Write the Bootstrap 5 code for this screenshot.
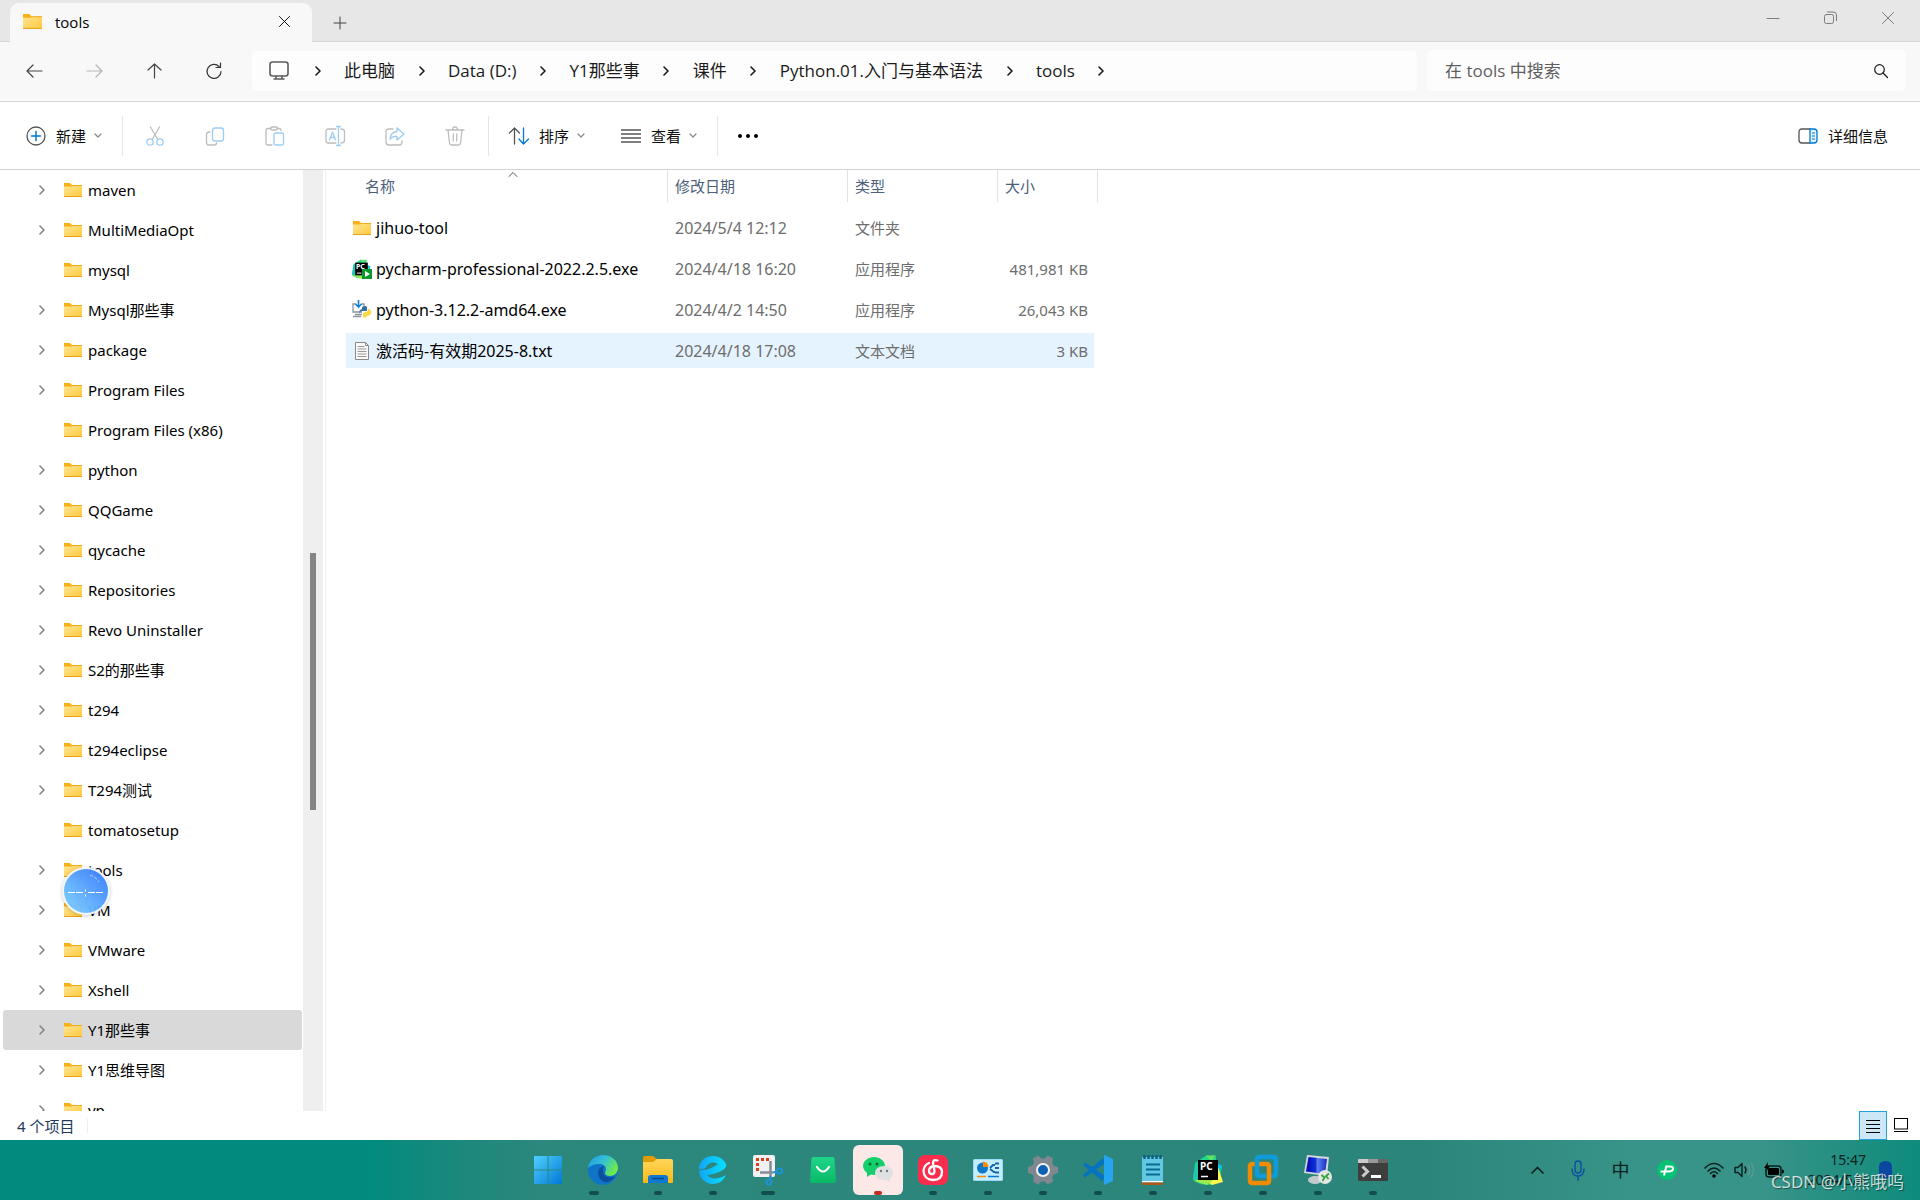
<!DOCTYPE html>
<html lang="zh-CN">
<head>
<meta charset="utf-8">
<meta name="viewport" content="width=device-width, initial-scale=1">
<title>tools</title>
<link href="https://cdn.jsdelivr.net/npm/bootstrap@5.3.0/dist/css/bootstrap.min.css" rel="stylesheet">
<style>
body{font-family:"Noto Sans","Noto Sans CJK SC",sans-serif;font-size:15px;line-height:20px;color:#000;background:#fff;overflow:hidden}
button{font:inherit;color:inherit;background:none;border:0;padding:0}
svg{display:block;flex:none;overflow:visible}
.ln{fill:none;stroke-linecap:round;stroke-linejoin:round}
.ln:not([stroke]){stroke:currentColor}
.cond{font-family:"Open Sans","Noto Sans CJK SC",sans-serif}
.tabstrip{height:42px;background:#e7e7e7;border-bottom:1px solid #d6d6d6;padding-left:10px}
.wintab{width:302px;height:39px;background:#f8f8f8;border-radius:9px 9px 0 0;margin-bottom:-1px;padding:0 22px 2px 13px;gap:13px}
.newtab{margin-left:22px}
.caption-btns{gap:45px;padding:11px 26px 0 0;color:#7b7b7b}
.navband{height:60px;background:#f8f8f8;border-bottom:1px solid #d6d6d6;padding:8px 14px 10px 26px;color:#1a1a1a;font-size:17px;line-height:24px}
.navkeys{gap:43px;width:226px}
.addressbar{height:40px;background:#fdfdfd;border-radius:5px;padding:0 16px 0 17px;margin-right:10px}
.addressbar ol{list-style:none;margin:0;padding:0 0 0 2px}
.addressbar a{color:#1a1a1a;text-decoration:none;white-space:nowrap}
.crumb-sep{width:53px;display:flex;justify-content:center}
.searchbox{width:479px;height:41px;background:#fdfdfd;border-radius:5px;padding:0 18px}
.searchbox input{border:0;background:none;outline:0;color:#5f5f5f;font:inherit;padding:0}
.searchbox input::placeholder{color:#5f5f5f;opacity:1}
.cmdbar{height:68px;border-bottom:1px solid #d2d2d2;padding:0 32px 0 26px;color:#111}
.cmd{display:flex;align-items:center;gap:10px}
.cmd svg:last-child:not(:first-child){color:#888;margin-left:-2px}
.vline{width:1px;height:40px;background:#e6e6e6}
.cmdgroup{gap:20px}
.sortview{gap:36px}
.icongroup{gap:40px;padding:0 23px 0 22px}
.main-area{flex:1 1 0;min-height:0}
.tree{width:303px;overflow:hidden;margin:0;padding:0;list-style:none}
.tree a{display:flex;align-items:center;height:40px;margin:0 1px 0 3px;padding-left:34px;color:#000;text-decoration:none;border-radius:3px;white-space:nowrap}
.tree a.active{background:#d9d9d9}
.tree .twist{width:27px;color:#858585}
.tree .nm{margin-left:6px}
.scrollrail{width:20px;background:#efefef;padding:383px 0 0 7px}
.scrollthumb{width:6px;height:257px;background:#858585}
.content-pane{border-left:1px solid #f0f0f0;margin-left:2px;padding-left:20px}
.filetable{width:752px;table-layout:fixed;border-collapse:separate;border-spacing:0}
.filetable th{font-weight:400;color:#4c607a;height:32px;padding:0 0 0 7px;border-right:1px solid #e2e2e2}
.filetable th:first-child{padding-left:19px}
.filetable td{height:41px;padding:3px 0 3px 7px;color:#6d6d6d;white-space:nowrap}
.filetable td:nth-child(-n+2){font-size:16px}
.filetable td:first-child{padding-left:6px;color:#000}
.filetable td:last-child{padding:3px 10px 3px 0;text-align:right}
.filetable .spacer td{height:5px;padding:0}
.cellfill{height:35px;display:flex;align-items:center}
.filetable tr.picked td{background:linear-gradient(#e5f3ff,#e5f3ff) 0 3px/100% 35px no-repeat}
.filetable tr.picked td:last-child{background-size:calc(100% - 4px) 35px}
.statusbar{height:29px;color:#1e3a5c;padding:0 5px 0 17px}
.statusbar .vline{height:14px;margin-left:13px;background:#eee}
.viewbtn{width:28px;height:29px;border:1px solid transparent;display:flex;align-items:center;justify-content:center}
.viewbtn.on{background:#cce8f6;border-color:#26a0da}
.taskbar{height:60px;background:linear-gradient(90deg,#008b7e 0,#008b7e 19%,#1c887c 24%,#2c877d 28%,#2c857b 74%,#389388 85%,#389388 92%,#0e8b7c 100%)}
.apps{gap:5px;padding-left:523px}
.app{width:50px;height:50px;border-radius:6px;position:relative;display:flex;align-items:center;justify-content:center}
.app::after{content:"";position:absolute;bottom:0;left:21px;width:8px;height:4px;border-radius:2px;background:#124e49}
.app.idle::after{display:none}
.app.wide::after{left:18px;width:14px}
.app.multi::after{left:11px;width:10px}
.app.alert-on{background:#fde8e8}
.app.alert-on::after{background:#c42b1c}
.tray{color:#08201d;padding-right:28px;gap:27px}
.trayset{gap:10px}
.ime{font-size:18px}
.clockset{gap:13px;margin-left:-3px}
.clock{text-align:right;font-size:14px;line-height:20px;color:#08201d}
.watermark{position:absolute;right:16px;bottom:6px;font-size:17px;line-height:24px;color:rgba(255,255,255,.78);text-shadow:1px 1px 1px rgba(0,0,0,.45);white-space:nowrap}
.sortmark{position:absolute;left:182px;top:2px}
.floatball{position:absolute;left:62px;top:867px;width:48px;height:48px;opacity:.96;filter:drop-shadow(0 1px 2px rgba(0,0,0,.2))}
</style>
<script src="https://cdn.jsdelivr.net/npm/bootstrap@5.3.0/dist/js/bootstrap.bundle.min.js"></script>
</head>
<body>
<svg width="0" height="0" class="position-absolute" aria-hidden="true">
<defs>
<linearGradient id="fg" x1="0" y1="0" x2="1" y2="1"><stop offset="0" stop-color="#ffe596"/><stop offset="1" stop-color="#ffc93c"/></linearGradient>
<linearGradient id="wg" x1="0" y1="0" x2="1" y2="1"><stop offset="0" stop-color="#4fd0ff"/><stop offset="1" stop-color="#0078d4"/></linearGradient>
<linearGradient id="eg" x1="0" y1="0" x2="1" y2=".5"><stop offset="0" stop-color="#1b9de2"/><stop offset=".55" stop-color="#35c1d0"/><stop offset="1" stop-color="#6bea4a"/></linearGradient>
<linearGradient id="yg" x1="0" y1="0" x2="0" y2="1"><stop offset="0" stop-color="#ffd65c"/><stop offset="1" stop-color="#f9b914"/></linearGradient>
<linearGradient id="cg" x1="0" y1="0" x2="1" y2="0"><stop offset="0" stop-color="#12a5f4"/><stop offset="1" stop-color="#05e0ff"/></linearGradient>
<linearGradient id="gg" x1="0" y1="0" x2="0" y2="1"><stop offset="0" stop-color="#1ed58a"/><stop offset="1" stop-color="#09b964"/></linearGradient>
<linearGradient id="bg1" x1="0" y1="1" x2="1" y2="0"><stop offset="0" stop-color="#80d4ff"/><stop offset="1" stop-color="#3478fc"/></linearGradient>
<linearGradient id="mg" x1="0" y1="0" x2="1" y2="0"><stop offset="0" stop-color="#0008b0"/><stop offset=".45" stop-color="#1230d8"/><stop offset=".55" stop-color="#5b80f0"/><stop offset="1" stop-color="#1a2ac4"/></linearGradient>
<symbol id="folder" viewBox="0 0 18 14"><path d="M0 0h6l2 2v3H0z" fill="#f9b116"/><path d="M0 3.500h8l1.500-1.500H18v12H0z" fill="url(#fg)"/><path d="M8 2.500h10" stroke="#f0ac1b"/><path d="M0 13.500h18" stroke="#e8a11c"/></symbol>
<symbol id="chev" viewBox="0 0 6 10"><path d="M1 1l4 4-4 4" class="ln" stroke-width="1.6"/></symbol>
<symbol id="down" viewBox="0 0 8 5"><path d="M1 1l3 3 3-3" class="ln" stroke-width="1.200"/></symbol>
<symbol id="cross" viewBox="0 0 12 12"><path d="M.5.5l11 11M11.500.5l-11 11" class="ln"/></symbol>
<symbol id="pycharm" viewBox="0 0 30 30"><path d="M2 8l12-8 7 2 2-2v14l6-3-3 16-9 3-10-1-7-4z" fill="#21d789"/><path d="M0 22L4 6l6 24z" fill="#20c7b5"/><path d="M13 1l9-1-3 6z" fill="#6be05a"/><path d="M22 12l4-3 3 2-2 5z" fill="#07c3f2"/><path d="M12 25l13-13 5 15-11 3z" fill="#fcf84a"/><path d="M1 26l13 4 6-5H4z" fill="#9aec4a"/><path d="M5 5h20v20H5z"/><path d="M8 21.500h7" stroke="#fff" stroke-width="1.500"/></symbol>
</defs>
</svg>

<div class="d-flex flex-column vh-100 position-relative">
<header>
  <div class="tabstrip d-flex align-items-end">
    <div class="wintab d-flex align-items-center cond">
      <svg width="19" height="15"><use href="#folder"/></svg><span class="flex-grow-1">tools</span>
      <button aria-label="关闭标签页"><svg width="11" height="11"><use href="#cross"/></svg></button>
    </div>
    <button class="newtab align-self-center pt-1" aria-label="新建标签页"><svg width="12" height="12"><path d="M6 0v12M0 6h12" class="ln" stroke="#444"/></svg></button>
    <div class="caption-btns d-flex ms-auto align-self-start">
      <button aria-label="最小化"><svg width="12" height="12"><path d="M0 6.500h12" class="ln"/></svg></button>
      <button aria-label="还原"><svg width="13" height="13"><rect x=".5" y="3.500" width="9" height="9" rx="2" class="ln"/><path d="M3.500 1h5.500q3.500 0 3.500 3v5.500" class="ln"/></svg></button>
      <button aria-label="关闭"><svg width="12" height="12"><use href="#cross"/></svg></button>
    </div>
  </div>
  <nav class="navband d-flex align-items-center cond" aria-label="导航">
    <div class="navkeys d-flex align-items-center">
      <button aria-label="后退"><svg width="17" height="14"><path d="M16 7H1m6-6L1 7l6 6" class="ln" stroke="#444" stroke-width="1.200"/></svg></button>
      <button aria-label="前进" disabled><svg width="17" height="14"><path d="M1 7h15m-6-6l6 6-6 6" class="ln" stroke="#b5b5b5" stroke-width="1.200"/></svg></button>
      <button aria-label="向上"><svg width="17" height="15"><path d="M8.500 15V1M2 7l6.500-6L15 7" class="ln" stroke="#444" stroke-width="1.200"/></svg></button>
      <button aria-label="刷新"><svg width="16" height="16"><path d="M13 3.500A7 7 0 1 0 15 8.500M14.500 0v4.500H10" class="ln" stroke="#333" stroke-width="1.200"/></svg></button>
    </div>
    <div class="addressbar d-flex align-items-center flex-grow-1">
      <svg width="20" height="19"><rect x="1" y="1" width="18" height="14" rx="2.500" class="ln" stroke="#5c5c5c" stroke-width="1.600"/><path d="M7 15v3m6-3v3M5 18h10" class="ln" stroke="#5c5c5c" stroke-width="1.500"/></svg>
      <ol class="d-flex align-items-center">
        <li class="crumb-sep"><svg width="6" height="10"><use href="#chev"/></svg></li><li><a href="#">此电脑</a></li>
        <li class="crumb-sep"><svg width="6" height="10"><use href="#chev"/></svg></li><li><a href="#">Data (D:)</a></li>
        <li class="crumb-sep"><svg width="6" height="10"><use href="#chev"/></svg></li><li><a href="#">Y1那些事</a></li>
        <li class="crumb-sep"><svg width="6" height="10"><use href="#chev"/></svg></li><li><a href="#">课件</a></li>
        <li class="crumb-sep"><svg width="6" height="10"><use href="#chev"/></svg></li><li><a href="#">Python.01.入门与基本语法</a></li>
        <li class="crumb-sep"><svg width="6" height="10"><use href="#chev"/></svg></li><li><a href="#">tools</a></li>
        <li class="crumb-sep"><svg width="6" height="10"><use href="#chev"/></svg></li>
      </ol>
    </div>
    <div class="searchbox d-flex align-items-center">
      <input class="flex-grow-1" type="text" aria-label="搜索" placeholder="在 tools 中搜索">
      <svg width="14" height="14"><circle cx="5.500" cy="5.500" r="4.800" class="ln" stroke-width="1.200"/><path d="M9 9l4.500 4.500" class="ln" stroke-width="1.200"/></svg>
    </div>
  </nav>
  <div class="cmdbar d-flex align-items-center">
    <div class="cmdgroup d-flex align-items-center">
    <button class="cmd"><svg width="20" height="20"><circle cx="10" cy="10" r="9" class="ln" stroke="#555" stroke-width="1.300"/><path d="M10 5.500v9M5.500 10h9" class="ln" stroke="#0078d4" stroke-width="1.500"/></svg><span>新建</span><svg width="8" height="5"><use href="#down"/></svg></button>
    <div class="d-flex align-items-center">
    <div class="vline"></div>
    <div class="icongroup d-flex align-items-center">
      <button disabled aria-label="剪切"><svg width="20" height="20"><path d="M5.500 1l7 12M14.500 1l-7 12" class="ln" stroke="#bdbdbd" stroke-width="1.300"/><circle cx="5" cy="16" r="3.200" class="ln" stroke="#9ccdf0" stroke-width="1.300"/><circle cx="15" cy="16" r="3.200" class="ln" stroke="#9ccdf0" stroke-width="1.300"/></svg></button>
      <button disabled aria-label="复制"><svg width="20" height="20"><path d="M5 6H4q-2.500 0-2.500 2.500v8Q1.500 19 4 19h5q2.500 0 2.500-2" class="ln" stroke="#bdbdbd" stroke-width="1.300"/><rect x="7.500" y="2" width="11" height="13" rx="2.500" class="ln" stroke="#9ccdf0" stroke-width="1.300"/></svg></button>
      <button disabled aria-label="粘贴"><svg width="20" height="20"><path d="M6 2.500H3q-2 0-2 2V17q0 2 2 2h4M12 2.500h2q2 0 2 2" class="ln" stroke="#bdbdbd" stroke-width="1.300"/><rect x="5.500" y="1" width="7" height="3" rx="1.500" class="ln" stroke="#bdbdbd" stroke-width="1.300"/><rect x="9" y="7" width="9.500" height="12" rx="1.500" class="ln" stroke="#9ccdf0" stroke-width="1.300"/></svg></button>
      <button disabled aria-label="重命名"><svg width="20" height="20"><path d="M11 3H3.500Q1 3 1 5.500v9Q1 17 3.500 17H11M16 3q3.500 0 3.500 3v8q0 3-3.500 3" class="ln" stroke="#bdbdbd" stroke-width="1.300"/><path d="M4.500 14L7.500 6l3 8M5.500 11.500h4M11.500.5h4M11.500 19.500h4M13.500.5v19" class="ln" stroke="#9ccdf0" stroke-width="1.300"/></svg></button>
      <button disabled aria-label="共享"><svg width="20" height="20"><path d="M8 3H4Q1 3 1 6v10q0 3 3 3h10q3 0 3-3v-1" class="ln" stroke="#bdbdbd" stroke-width="1.300"/><path d="M12 2l7 6-7 6v-3.500q-5-.5-7 3Q5.500 6 12 5.500z" class="ln" stroke="#9ccdf0" stroke-width="1.300"/></svg></button>
      <button disabled aria-label="删除"><svg width="20" height="20"><path d="M1 4h18M3 4l1.500 13q.3 2 2 2h7q1.700 0 2-2L17 4M7.500 4q0-3 2.500-3t2.500 3M8.300 8v7M11.700 8v7" class="ln" stroke="#bdbdbd" stroke-width="1.300"/></svg></button>
    </div>
    <div class="vline"></div>
    </div>
    <div class="sortview d-flex align-items-center">
    <button class="cmd"><svg width="20" height="18"><path d="M5.500 17V1M.5 6l5-5 5 5" class="ln" stroke="#555" stroke-width="1.300"/><path d="M14.500 1v16M10 12l4.500 5 5-5" class="ln" stroke="#0078d4" stroke-width="1.300"/></svg><span>排序</span><svg width="8" height="5"><use href="#down"/></svg></button>
    <button class="cmd"><svg width="20" height="14"><path d="M0 1h20M0 5h20M0 9h20M0 13h20" stroke="#555" stroke-width="1.300"/></svg><span>查看</span><svg width="8" height="5"><use href="#down"/></svg></button>
    </div>
    <div class="vline"></div>
    <button aria-label="更多"><svg width="22" height="4"><circle cx="2" cy="2" r="2"/><circle cx="10" cy="2" r="2"/><circle cx="18" cy="2" r="2"/></svg></button>
    </div>
    <button class="cmd ms-auto"><svg width="20" height="16"><path d="M12 1H4Q1 1 1 4v8q0 3 3 3h8" class="ln" stroke="#555" stroke-width="1.300"/><path d="M12 1h4q3 0 3 3v8q0 3-3 3h-4z" fill="#e4f2fc" stroke="#0078d4" stroke-width="1.300"/><path d="M14 5h3M14 8h3M14 11h3" stroke="#0078d4" stroke-width="1.200"/></svg><span>详细信息</span></button>
  </div>
</header>

<div class="main-area d-flex">
  <ul class="tree" id="tree"></ul>
  <div class="scrollrail"><div class="scrollthumb"></div></div>
  <main class="content-pane flex-grow-1 position-relative">
    <svg class="sortmark" width="10" height="5"><path d="M1 4.500L5 .5l4 4" class="ln" stroke="#555"/></svg>
    <table class="filetable">
      <colgroup><col style="width:322px"><col style="width:180px"><col style="width:150px"><col style="width:100px"></colgroup>
      <thead><tr><th>名称</th><th>修改日期</th><th>类型</th><th>大小</th></tr></thead>
      <tbody>
        <tr class="spacer"><td></td></tr>
        <tr><td><div class="cellfill"><svg width="20" height="14"><use href="#folder"/></svg><span class="ms-1">jihuo-tool</span></div></td><td>2024/5/4 12:12</td><td>文件夹</td><td></td></tr>
        <tr><td><div class="cellfill"><svg width="20" height="20" viewBox="0 0 20 20"><use href="#pycharm" width="19" height="20"/><text x="4" y="10" font-size="7" font-weight="700" fill="#fff">PC</text><rect x="10" y="10" width="10" height="10" fill="#0a9a2c"/><path d="M13 12l5 3-5 3z" fill="#fff"/></svg><span class="ms-1">pycharm-professional-2022.2.5.exe</span></div></td><td>2024/4/18 16:20</td><td>应用程序</td><td>481,981 KB</td></tr>
        <tr><td><div class="cellfill"><svg width="20" height="20" viewBox="0 0 20 20"><path d="M4 4H1v8h9M9 4h3v3M3 14.500h7M1 16.500h8" fill="none" stroke="#8c979e" stroke-width="1.300"/><path d="M6.500 0v6M3.500 4l3 3 3-3" fill="none" stroke="#0d83d8" stroke-width="1.600"/><path d="M10 7q4-2 5 0v4h-5q-2 0-2 3-2-4 2-5z" fill="#3673a5"/><path d="M16 9q4 0 3 5-1 2-4 2-1 3-4 1v-3q0-2 3-2 2 0 2-3z" fill="#ffd84a"/></svg><span class="ms-1">python-3.12.2-amd64.exe</span></div></td><td>2024/4/2 14:50</td><td>应用程序</td><td>26,043 KB</td></tr>
        <tr class="picked"><td><div class="cellfill"><svg width="20" height="20" viewBox="0 0 20 20"><path d="M3.500 1.500h10l3 3v14h-13z" fill="#fafafa" stroke="#8a8a8a"/><path d="M13.500 1.500v3h3" fill="none" stroke="#8a8a8a"/><path d="M5.500 5.500h7M5.500 8h9M5.500 10.500h9M5.500 13h9M5.500 15.500h9" stroke="#999"/></svg><span class="ms-1">激活码-有效期2025-8.txt</span></div></td><td>2024/4/18 17:08</td><td>文本文档</td><td>3 KB</td></tr>
      </tbody>
    </table>
  </main>
</div>
<footer class="statusbar d-flex align-items-center"><span>4 个项目</span><span class="vline"></span>
  <div class="d-flex ms-auto">
    <button class="viewbtn on" aria-label="详细信息视图"><svg width="14" height="14"><path d="M0 1.500h14M0 5.500h14M0 9.500h14M0 13.500h14" stroke="#000"/></svg></button>
    <button class="viewbtn" aria-label="大图标视图"><svg width="14" height="15"><rect x=".5" y=".5" width="13" height="10.500" fill="#fff" stroke="#000"/><path d="M0 13.500h14" stroke="#000"/></svg></button>
  </div>
</footer>

<div class="taskbar d-flex align-items-center position-relative">
  <div class="apps d-flex">
    <button class="app idle" aria-label="开始"><svg width="30" height="30"><path d="M1 1h13.500v13.500H1zM15.500 1H29v13.500H15.500zM1 15.500h13.500V29H1zM15.500 15.500H29V29H15.500z" fill="url(#wg)"/></svg></button>
    <button class="app multi" aria-label="Edge"><svg width="30" height="30"><circle cx="15" cy="15" r="15" fill="#0f74c8"/><path d="M0 13C1 5 8 0 15 0c9 0 15 6 15 13 0 5-4 8-8 8-3 0-5-1-5-3 0-1 1-2 1-4 0-3-3-5-7-5-5 0-9 2-11 4z" fill="url(#eg)"/><path d="M10 18c0-4 3-7 6-7-4 8 3 14 11 10-3 6-9 7-11 6-4-2-6-5-6-9z" fill="#0c4f9e"/></svg></button>
    <button class="app" aria-label="文件资源管理器"><svg width="30" height="28"><path d="M0 2q0-2 2-2h8l4 3v6H0z" fill="#e09c00"/><path d="M0 6h10l4-3h14q2 0 2 2v21q0 1-1 1H1q-1 0-1-1z" fill="url(#yg)"/><path d="M5 27v-5q0-3 3-3h14q3 0 3 3v5z" fill="#1079cf"/><path d="M9 22.500h12" stroke="#07488c" stroke-width="1.500"/></svg></button>
    <button class="app" aria-label="浏览器"><svg width="28" height="28"><path fill-rule="evenodd" d="M0 15C-1 6 6 0 14 0c7 0 11 4 13 8 1 3-2 6-7 8-5 2-9 3-12 3 4 5 12 4 19 0-2 5-7 9-13 9C7 28 1 23 0 15zM6 14c5-1 9-3 13-6-4-3-11-2-13 6z" fill="url(#cg)"/><path d="M0 14Q5 14 11 10" fill="none" stroke="#2c867c" stroke-width="1.500"/></svg></button>
    <button class="app wide" aria-label="截图工具"><svg width="30" height="30"><rect width="22" height="22" rx="2" fill="#f1f1f4"/><path d="M4.500 16V4.500H17" fill="none" stroke="#d24317" stroke-width="3" stroke-dasharray="3 2"/><path d="M7 17.500h13M17.500 6v16" stroke="#858c97" stroke-width="2.500"/><circle cx="26.500" cy="16" r="2.600" fill="none" stroke="#1d93dc" stroke-width="1.800"/><circle cx="16" cy="27" r="2.600" fill="none" stroke="#1d93dc" stroke-width="1.800"/><path d="M20 17.500l4-1M17.500 21l-1 4" stroke="#1d93dc" stroke-width="2"/></svg></button>
    <button class="app idle" aria-label="商店"><svg width="26" height="26"><path d="M3 0h20q1.500 0 1.500 1.500L26 24q0 2-2 2H2q-2 0-2-2L1.500 1.500Q1.500 0 3 0z" fill="url(#gg)"/><path d="M7 10q6 9 12 0" fill="none" stroke="#fff" stroke-width="2.200" stroke-linecap="round"/></svg></button>
    <button class="app alert-on" aria-label="微信"><svg width="30" height="26"><path d="M11 0c6 0 11 4 11 9 0 5-5 9-11 9l-3-.5L4 20v-4C2 14 0 12 0 9c0-5 5-9 11-9z" fill="#15cf6d"/><circle cx="7" cy="7" r="1.500" fill="#096a38"/><circle cx="14" cy="7" r="1.500" fill="#096a38"/><path d="M21 9c5 0 9 3 9 7 0 2-1 4-3 5v4l-3-2h-3c-5 0-9-3-9-7s4-7 9-7z" fill="#dfe0e1"/><circle cx="18" cy="14" r="1.200" fill="#777"/><circle cx="24" cy="14" r="1.200" fill="#777"/></svg></button>
    <button class="app" aria-label="网易云音乐"><svg width="30" height="30"><rect width="30" height="30" rx="7" fill="#fb2d4d"/><path d="M19.500 5.500Q15 4 15 8l1.500 8q0 3-2.500 3-3 0-3-3 0-4 5-5 8 0 8 6 0 8-9 8-9-.5-9.500-9Q6 10 11 8" fill="none" stroke="#fff" stroke-width="2.300" stroke-linecap="round"/></svg></button>
    <button class="app" aria-label="控制面板"><svg width="30" height="22"><rect width="30" height="22" rx="1.500" fill="#9bdcfb"/><rect x="1" y="1" width="28" height="20" fill="#c4edff"/><circle cx="9.500" cy="9" r="5.500" fill="#0f78ca"/><path d="M10 8V2.500a5.500 5.500 0 0 1 5.500 5.500z" fill="#ff8c00"/><path d="M17 9l3-3h2M17 10l4 3h1M22 4.500h4M22 9h4M22 13.500h4" stroke="#1267aa" stroke-width="1.800" fill="none"/><path d="M4 17.500h9" stroke="#ff8c00" stroke-width="1.500"/><path d="M15 17.500h11" stroke="#0f78ca" stroke-width="1.500"/></svg></button>
    <button class="app" aria-label="设置"><svg width="30" height="30"><g fill="#808790"><circle cx="15" cy="15" r="11.500"/><path d="M12 0h6l2 6H10zM12 30h6l2-6H10z" transform="rotate(30 15 15)"/><path d="M12 0h6l2 6H10zM12 30h6l2-6H10z" transform="rotate(90 15 15)"/><path d="M12 0h6l2 6H10zM12 30h6l2-6H10z" transform="rotate(150 15 15)"/></g><circle cx="15" cy="15" r="6" fill="#0c60b4" stroke="#f2f2f2" stroke-width="2"/></svg></button>
    <button class="app" aria-label="VS Code"><svg width="30" height="30"><path d="M2 7.500L0 10l19 16 3-5zM0 20l2 2.500L22 8l-2-5z" fill="#0573c0"/><path d="M21 0l8 3.500q1 .5 1 1.500v20q0 1-1 1.500L21 30V0z" fill="#26a4f2"/></svg></button>
    <button class="app" aria-label="记事本"><svg width="24" height="30"><path d="M1 2h21v24H1z" fill="#62c7e2"/><path d="M1 26h21v1.500H1z" fill="#fff"/><path d="M1 27.500h21V29q0 1-1 1H2q-1 0-1-1z" fill="#ab5a1c"/><path d="M3.500 0v4M7.500 0v4M11.500 0v4M15.500 0v4M19.500 0v4" stroke="#0c5d80" stroke-width="2.400"/><path d="M5 9.500h14M5 14.500h14M5 19.500h14" stroke="#0b6a92" stroke-width="2"/></svg></button>
    <button class="app" aria-label="PyCharm"><svg width="30" height="30"><use href="#pycharm"/><text x="7" y="15" font-size="10" font-weight="700" fill="#fff">PC</text></svg></button>
    <button class="app" aria-label="VMware"><svg width="30" height="30"><rect x="9" y="2" width="19" height="19" rx="2" fill="none" stroke="#0f9adb" stroke-width="4.500"/><rect x="2" y="9" width="19" height="19" rx="2" fill="none" stroke="#f38b00" stroke-width="4.500"/><path d="M9 11.500V6" fill="none" stroke="#0f9adb" stroke-width="4.500"/></svg></button>
    <button class="app" aria-label="Xshell"><svg width="30" height="30"><ellipse cx="12" cy="25" rx="7" ry="4" fill="#c3cacc"/><path d="M4 0l22 2-2 19L1 18z" fill="#d3d7dc"/><path d="M5.500 2l18.500 2-2 15L3 16.500z" fill="url(#mg)"/><circle cx="22" cy="22" r="7" fill="#e3e6e3"/><path d="M18.500 20l3 2.500-2 3.500M26 18.500l-3 2.500 2.500 3" stroke="#32a138" stroke-width="1.800" fill="none"/></svg></button>
    <button class="app" aria-label="终端"><svg width="30" height="22"><rect width="30" height="22" rx="1.500" fill="#3e3e3e"/><path d="M0 4V1q0-1 1-1h9v4z" fill="#ccc"/><path d="M10 0h10v4H10z" fill="#999"/><path d="M20 0h9q1 0 1 1v3H20z" fill="#666"/><path d="M4.500 7.500l5 5-5 5" fill="none" stroke="#ccc" stroke-width="3"/><path d="M13 17.500h10" stroke="#fff" stroke-width="3"/></svg></button>
  </div>
  <div class="tray d-flex align-items-center ms-auto">
    <svg width="13" height="8"><path d="M1 7l5.500-5.500L12 7" class="ln" stroke-width="1.700"/></svg>
    <svg width="14" height="20"><rect x="4" y="1" width="6" height="12" rx="3" class="ln" stroke="#0b4fa0" stroke-width="1.400"/><path d="M1 9q0 7 6 7t6-7M7 16v4" class="ln" stroke="#0b4fa0" stroke-width="1.400"/></svg>
    <span class="ime">中</span>
    <svg width="20" height="20"><circle cx="10" cy="10" r="10" fill="#07c274"/><path d="M3.500 11.500h8q4 0 4.500-2.500.5-3-4-2.500H10M9.500 5.500L7 15.500" fill="none" stroke="#fff" stroke-width="2"/></svg>
    <div class="trayset d-flex align-items-center">
    <svg width="20" height="16"><path d="M1 6q9-9 18 0M4 9q6-6 12 0M6.500 11.500q3.500-3.500 7 0" class="ln" stroke-width="1.600"/><circle cx="10" cy="14" r="1.800"/></svg>
    <svg width="20" height="16"><path d="M1 5.500h3L8 1.500v13l-4-4H1z" class="ln" stroke-width="1.400"/><path d="M11 5q2 3 0 6" class="ln" stroke-width="1.400"/><path d="M14 3q4 5 0 10M17 1q5 7 0 14" class="ln" stroke="#5a9a92" stroke-width="1.300"/></svg>
    <svg width="20" height="16"><rect x="2" y="4" width="15" height="11" rx="3" class="ln" stroke-width="1.500"/><rect x="4" y="6" width="11" height="7" rx="1"/><path d="M18 7.500q2 0 2 2t-2 2zM4 0L0 6h3L2 10l4-6H3.500z"/></svg>
    </div>
    <div class="clockset d-flex align-items-center">
    <div class="clock"><div>15:47</div><div>2024/5/4</div></div>
    <svg width="13" height="18"><path d="M0 15V6q0-6 6.500-6T13 6v9q-6 5-13 0z" fill="#0a479e"/></svg>
    </div>
  </div>
  <div class="watermark">CSDN @小熊哦呜</div>
</div>
<svg class="floatball" viewBox="0 0 48 48"><circle cx="24" cy="24" r="24" fill="#f2f7fc"/><circle cx="24" cy="24" r="22" fill="url(#bg1)"/><path d="M6 25.500h7M14 25.500h7M26 25.500h7M34 25.500h7" stroke="#fff"/><path d="M23.500 22.500v2M23.500 27.500v2" stroke="#fff"/><path d="M28 8q6 2 9 7" stroke="#cfe4ff" stroke-dasharray="3 2" fill="none"/></svg>
</div>
<script>
const names=["maven","MultiMediaOpt","-mysql","Mysql那些事","package","Program Files","-Program Files (x86)","python","QQGame","qycache","Repositories","Revo Uninstaller","S2的那些事","t294","t294eclipse","T294测试","-tomatosetup","tools","VM","VMware","Xshell","Y1那些事","Y1思维导图","vp"];
document.getElementById("tree").innerHTML=names.map(n=>{
  const leaf=n[0]==="-",t=leaf?n.slice(1):n;
  return `<li><a href="#"${t==="Y1那些事"?' class="active"':""}><span class="twist">${leaf?"":'<svg width="10" height="10"><use href="#chev"/></svg>'}</span><svg width="18" height="14"><use href="#folder"/></svg><span class="nm">${t}</span></a></li>`}).join("");
</script>
</body>
</html>
